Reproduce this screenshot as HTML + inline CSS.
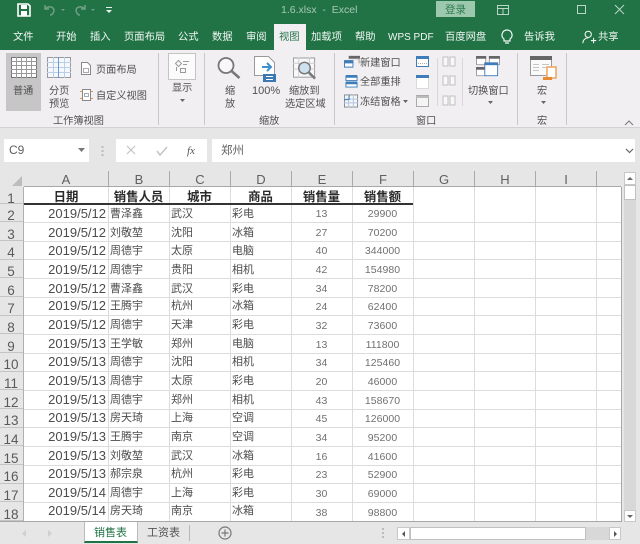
<!DOCTYPE html>
<html><head><meta charset="utf-8"><style>
html,body{margin:0;padding:0}
body{width:640px;height:544px;overflow:hidden;position:relative;background:#e6e6e6;font-family:"Liberation Sans","Noto Sans CJK SC",sans-serif;color:#444}
div,span,svg{position:absolute}
.t{white-space:nowrap;line-height:14px;font-size:10.2px;color:#505050;margin-top:1px}
.tab{top:31px;color:#f2f7f4;font-size:10.3px;line-height:14px;white-space:nowrap}
.sep{width:1px;background:#c9c8c9;top:53px;height:72px}
.ch{top:171px;height:16px;text-align:center;font-size:13px;line-height:17px;color:#606060;border-right:1px solid #aaa;box-sizing:border-box}
.r{left:0;width:601px}
.rh{left:0;width:23px;top:0;bottom:0;background:#e6e6e6;text-align:center;font-size:13.5px;color:#5a5a5a;line-height:23px;border-bottom:1px solid #c4c4c4;box-sizing:border-box;padding-right:1px}
.r b{position:absolute;font-weight:normal;white-space:nowrap;top:2px;line-height:14px}
.r.e b{top:3px}
.r.z b{top:1px}
.d{right:495px;font-size:13px;color:#4c4c4c}
.n1{left:110px;font-size:11px;color:#4c4c4c}
.n2{left:171px;font-size:11px;color:#4c4c4c}
.n3{left:232px;font-size:11px;color:#4c4c4c}
.r b.q,.r.e b.q,.r.z b.q{left:291px;width:61px;text-align:center;font-size:10.5px;color:#707070;top:3px;letter-spacing:.05px}
.r b.m,.r.e b.m,.r.z b.m{left:352px;width:61px;text-align:center;font-size:10.5px;color:#707070;top:3px;letter-spacing:.05px}
.r b.h{font-weight:bold;font-size:12.4px;color:#2a2a2a;text-align:center;top:3px}
.vl{top:187px;height:334px;width:1px;background:#dcdcdc}
.hl{left:24px;width:597px;height:1px;background:#dcdcdc}
</style></head><body>
<div style="left:0;top:0;width:640px;height:50px;background:#217346"></div>
<svg style="left:17px;top:3px" width="14" height="14" viewBox="0 0 14 14"><path d="M1 1h10l2 2v10H1z" fill="none" stroke="#fff" stroke-width="1.600"/><path d="M4 2h6v4H4zM4 8h6v5H4z" fill="#fff"/></svg>
<svg style="left:42px;top:3px" width="70" height="15" viewBox="0 0 70 15"><path d="M3 2v4h4M3 6c3-3 8-3 9 1 0 3-2 5-4 5" fill="none" stroke="#6f9f85" stroke-width="1.500"/><path d="M19 6l2 2 2-2z" fill="#6f9f85"/><path d="M43 2v4h-4M43 6c-3-3-8-3-9 1 0 3 2 5 4 5" fill="none" stroke="#6f9f85" stroke-width="1.500"/><path d="M49 6l2 2 2-2z" fill="#6f9f85"/></svg>
<svg style="left:105px;top:6px" width="8" height="8" viewBox="0 0 8 8"><path d="M1 1h6v1H1zM1 4h6L4 7z" fill="#e8f1ec"/></svg>
<div class="t" style="left:281px;top:2px;font-size:10.500px;color:#a8c8b5">1.6.xlsx&nbsp; -&nbsp; Excel</div>
<div style="left:436px;top:1px;width:39px;height:16px;background:#9cc8ae"></div>
<div class="t" style="left:445px;top:2px;color:#2f7b50;font-size:10.500px">登录</div>
<svg style="left:495px;top:3px" width="135" height="14" viewBox="0 0 135 14"><path d="M2.500 2.500h11v9h-11zM2.500 5.500h11M8 5.500v6" fill="none" stroke="#bcd6c6"/><path d="M82.500 2.500h8v8h-8z" fill="none" stroke="#bcd6c6"/><path d="M120 2l9 9M129 2l-9 9" stroke="#bcd6c6" fill="none"/></svg>

<div class="tab" style="left:13px">文件</div>
<div class="tab" style="left:56px">开始</div>
<div class="tab" style="left:90px">插入</div>
<div class="tab" style="left:124px">页面布局</div>
<div class="tab" style="left:178px">公式</div>
<div class="tab" style="left:212px">数据</div>
<div class="tab" style="left:246px">审阅</div>
<div style="left:274px;top:24px;width:32px;height:26px;background:#f1eff1"></div>
<div class="tab" style="left:279px;color:#217346">视图</div>
<div class="tab" style="left:311px">加载项</div>
<div class="tab" style="left:355px">帮助</div>
<div class="tab" style="left:388px;font-size:10px">WPS PDF</div>
<div class="tab" style="left:445px">百度网盘</div>
<svg style="left:499px;top:28px" width="16" height="17" viewBox="0 0 16 17"><path d="M8 2a5 5 0 0 0-3 9v2h6v-2a5 5 0 0 0-3-9zM6 15h4" fill="none" stroke="#f2f7f4" stroke-width="1.200"/></svg>
<div class="tab" style="left:524px">告诉我</div>
<svg style="left:582px;top:29px" width="16" height="16" viewBox="0 0 18 16"><circle cx="7" cy="5" r="3.500" fill="none" stroke="#f2f7f4" stroke-width="1.200"/><path d="M1 15c0-4 3-6 6-6M10 12h6M13 9v6" fill="none" stroke="#f2f7f4" stroke-width="1.200"/></svg>
<div class="tab" style="left:598px">共享</div>

<div style="left:0;top:50px;width:640px;height:77px;background:#f1eff1"></div>
<div style="left:0;top:127px;width:640px;height:1px;background:#d2d2d2"></div>
<div style="left:6px;top:53px;width:35px;height:58px;background:#c6c6c6"></div>
<svg style="left:11px;top:57px" width="26" height="21" viewBox="0 0 26 21"><rect x=".5" y=".5" width="25" height="20" fill="#fff" stroke="#777"/><path d="M0 4.500h26M0 8.500h26M0 12.500h26M0 16.500h26M5.500 0v21M10.500 0v21M15.500 0v21M20.500 0v21" stroke="#999"/></svg>
<div class="t" style="left:13px;top:84px">普通</div>
<svg style="left:47px;top:57px" width="24" height="21" viewBox="0 0 24 21"><rect x=".5" y=".5" width="23" height="20" fill="#f4f8fd" stroke="#9a9a9a"/><path d="M0 5.500h24M0 10.500h24M0 15.500h24M6.500 0v21M17.500 0v21" stroke="#b9cfe8"/><path d="M11.500 0v21" stroke="#6b9bd0"/></svg>
<div class="t" style="left:49px;top:84px">分页</div>
<div class="t" style="left:49px;top:97px">预览</div>
<svg style="left:81px;top:62px" width="10" height="13" viewBox="0 0 10 13"><path d="M.5.500h6l3 3v9h-9z" fill="#fff" stroke="#888"/><path d="M2.500 6.500h5v4h-5z" fill="none" stroke="#aaa"/></svg>
<div class="t" style="left:96px;top:63px">页面布局</div>
<svg style="left:80px;top:88px" width="13" height="14" viewBox="0 0 13 14"><path d="M2.500 1.500h8v11h-8z" fill="#fff" stroke="#888"/><path d="M0 3.500h2M11 3.500h2M0 10.500h2M11 10.500h2" stroke="#e09a50"/><path d="M4.500 5.500h4v3h-4z" fill="none" stroke="#aaa"/></svg>
<div class="t" style="left:96px;top:89px">自定义视图</div>
<div class="t" style="left:53px;top:114px">工作簿视图</div>
<div class="sep" style="left:158px"></div>

<div style="left:168px;top:53px;width:26px;height:25px;background:#fbfbfb;border:1px solid #c4c4c4"></div>
<svg style="left:174px;top:58px" width="16" height="16" viewBox="0 0 16 16"><path d="M1.500 5.500l3-3 3 3-3 3zM9 3.500h6M9 6.500h4M6.500 10.500h5v4h-5zM2.500 9v4" fill="none" stroke="#999"/></svg>
<div class="t" style="left:172px;top:81px">显示</div>
<svg style="left:180px;top:99px" width="5" height="3"><path d="M0 0h5L2.500 3z" fill="#666"/></svg>
<div class="sep" style="left:204px"></div>

<svg style="left:217px;top:57px" width="24" height="22" viewBox="0 0 24 22"><circle cx="9" cy="8.500" r="7.500" fill="#f8f8f8" stroke="#777" stroke-width="1.800"/><path d="M14.500 14l8 7" stroke="#777" stroke-width="2.500"/></svg>
<div class="t" style="left:225px;top:84px">缩</div>
<div class="t" style="left:225px;top:97px">放</div>
<svg style="left:254px;top:56px" width="22" height="26" viewBox="0 0 22 26"><path d="M.5.500h14l6 6v13H.5z" fill="#fff" stroke="#999"/><path d="M8 11h9M13 7l4 4-4 4" fill="none" stroke="#3f8fce" stroke-width="2"/><rect x="9" y="18" width="13" height="8" fill="#3d78b5"/><path d="M12 20.500h7M12 23.500h7" stroke="#fff"/></svg>
<div class="t" style="left:252px;top:83px;font-size:11px">100%</div>
<svg style="left:293px;top:57px" width="24" height="25" viewBox="0 0 25 25"><rect x=".5" y=".5" width="22" height="20" fill="#f8f8f8" stroke="#999"/><path d="M0 6h23M0 12h23M6 0v21M17 0v21" stroke="#ccc"/><circle cx="12" cy="11" r="6" fill="#cfe0ee" stroke="#777" stroke-width="1.500"/><path d="M16 15l7 7" stroke="#777" stroke-width="2.500"/></svg>
<div class="t" style="left:289px;top:84px">缩放到</div>
<div class="t" style="left:285px;top:97px">选定区域</div>
<div class="t" style="left:259px;top:114px">缩放</div>
<div class="sep" style="left:334px"></div>

<svg style="left:344px;top:55px" width="16" height="13" viewBox="0 0 17 13"><path d="M5 .500h12v3H5z" fill="#666"/><path d="M5 3.500h11v5" fill="none" stroke="#999"/><path d="M0 5h10v3H0z" fill="#3f7cba"/><path d="M.5 8h9v4.500h-9z" fill="#fff" stroke="#3f7cba"/></svg>
<div class="t" style="left:360px;top:56px">新建窗口</div>
<svg style="left:345px;top:75px" width="13" height="13" viewBox="0 0 14 14"><path d="M1 1h12v5H1z" fill="#fff" stroke="#3f7cba"/><path d="M1 8h12v5H1z" fill="#fff" stroke="#3f7cba"/><path d="M1 0h12v3H1zM1 7h12v3H1z" fill="#3f7cba"/></svg>
<div class="t" style="left:360px;top:75px">全部重排</div>
<svg style="left:344px;top:94px" width="14" height="14" viewBox="0 0 15 14"><rect x=".5" y=".5" width="14" height="13" fill="#f4f6fa" stroke="#888"/><path d="M0 5h15M5 0v14M10 0v14M0 9h15" stroke="#aec3dd"/><path d="M0 5.500h6M5.500 0v6" stroke="#3f7cba"/></svg>
<div class="t" style="left:360px;top:95px">冻结窗格</div>
<svg style="left:403px;top:100px" width="5" height="3"><path d="M0 0h5L2.500 3z" fill="#666"/></svg>
<svg style="left:416px;top:56px" width="14" height="54" viewBox="0 0 14 54"><rect x=".5" y=".5" width="12" height="10" fill="#fff" stroke="#3f7cba"/><path d="M0 1h13v2H0z" fill="#3f7cba"/><path d="M2 7.500h9" stroke="#aaa" stroke-dasharray="1 1"/><rect x=".5" y="20.500" width="12" height="12" fill="#fff" stroke="#bbb" stroke-dasharray="1 1"/><path d="M0 19h13v3H0z" fill="#3f7cba"/><rect x=".5" y="39.500" width="12" height="11" fill="#f4f4f4" stroke="#aaa"/><path d="M0 40h13v2H0z" fill="#bbb"/></svg>
<div class="sep" style="left:437px;top:58px;height:48px;background:#d8d8d8"></div>
<svg style="left:442px;top:56px" width="15" height="52" viewBox="0 0 15 52"><path d="M1 1h5v9H1zM8 1h5v9H8zM1 20h5v9H1zM8 20h5v9H8zM1 40h5v9H1zM8 40h5v9H8z" fill="#f8f8f8" stroke="#c0c0c0"/></svg>
<div class="sep" style="left:462px;top:58px;height:48px;background:#d8d8d8"></div>
<svg style="left:476px;top:56px" width="24" height="22" viewBox="0 0 26 24"><path d="M.5.500h10v9H.5zM14.500.500h11v9h-11zM.5 12.500h10v9H.5z" fill="#fff" stroke="#999"/><path d="M0 0h11v3H0zM14 0h12v3H14zM0 12h11v3H0z" fill="#666"/><rect x="9.500" y="7.500" width="14" height="14" fill="#fff" stroke="#3f7cba"/><path d="M9 7h15v3H9z" fill="#3f7cba"/></svg>
<div class="t" style="left:468px;top:84px">切换窗口</div>
<svg style="left:488px;top:101px" width="5" height="3"><path d="M0 0h5L2.500 3z" fill="#666"/></svg>
<div class="t" style="left:416px;top:114px">窗口</div>
<div class="sep" style="left:517px"></div>
<svg style="left:530px;top:56px" width="27" height="25" viewBox="0 0 27 25"><rect x=".5" y=".5" width="21" height="19" fill="#fafafa" stroke="#999"/><path d="M0 0h22v4H0z" fill="#666"/><path d="M3 8.500h6M3 11.500h6M3 14.500h6M12 8.500h7M12 11.500h4" stroke="#c5c5c5"/><path d="M17 11h9v11h-9z" fill="#fff" stroke="#eda45c" stroke-width="1.500"/><path d="M13 21h9v3h-9z" fill="#e88a33"/></svg>
<div class="t" style="left:537px;top:84px">宏</div>
<svg style="left:541px;top:101px" width="5" height="3"><path d="M0 0h5L2.500 3z" fill="#666"/></svg>
<div class="t" style="left:537px;top:114px">宏</div>
<div class="sep" style="left:566px"></div>
<svg style="left:624px;top:120px" width="10" height="6"><path d="M1 5l4-4 4 4" fill="none" stroke="#777"/></svg>

<div style="left:4px;top:139px;width:85px;height:23px;background:#fff"></div>
<div class="t" style="left:9px;top:142px;font-size:12px;color:#606060">C9</div>
<svg style="left:78px;top:148px" width="7" height="4"><path d="M0 0h7L3.500 4z" fill="#777"/></svg>
<div style="left:116px;top:139px;width:91px;height:23px;background:#fff"></div>
<svg style="left:126px;top:145px" width="11" height="11"><path d="M1 1l8 8M9 1l-8 8" stroke="#c4c4c4" stroke-width="1.200"/></svg>
<svg style="left:156px;top:146px" width="12" height="10"><path d="M1 5l3 4 7-8" fill="none" stroke="#c4c4c4" stroke-width="1.500"/></svg>
<div class="t" style="left:187px;top:143px;font-family:'Liberation Serif',serif;font-style:italic;font-size:11px;color:#555">fx</div>
<div style="left:212px;top:139px;width:423px;height:23px;background:#fff"></div>
<div class="t" style="left:221px;top:143px;font-size:11.500px;color:#666">郑州</div>
<svg style="left:625px;top:148px" width="9" height="6"><path d="M1 1l3.500 3.500L8 1" fill="none" stroke="#666" stroke-width="1.200"/></svg>
<svg style="left:101px;top:146px" width="3" height="11"><path d="M.5 0h2v2h-2zM.5 4h2v2h-2zM.5 8h2v2h-2z" fill="#bbb"/></svg>

<div style="left:24px;top:187px;width:597px;height:334px;background:#fff"></div>
<svg style="left:12px;top:176px" width="10" height="10"><path d="M10 0v10H0z" fill="#bdbdbd"/></svg>
<div class="ch" style="left:24px;width:85px">A</div>
<div class="ch" style="left:109px;width:61px">B</div>
<div class="ch" style="left:170px;width:61px">C</div>
<div class="ch" style="left:231px;width:61px">D</div>
<div class="ch" style="left:292px;width:61px">E</div>
<div class="ch" style="left:353px;width:61px">F</div>
<div class="ch" style="left:414px;width:61px">G</div>
<div class="ch" style="left:475px;width:61px">H</div>
<div class="ch" style="left:536px;width:61px">I</div>
<div style="left:24px;top:186px;width:597px;height:1px;background:#a8a8a8"></div>
<div style="left:23px;top:187px;width:1px;height:334px;background:#b0b0b0"></div>
<div class="vl" style="left:108px"></div><div class="vl" style="left:169px"></div><div class="vl" style="left:230px"></div><div class="vl" style="left:291px"></div><div class="vl" style="left:352px"></div><div class="vl" style="left:413px"></div><div class="vl" style="left:474px"></div><div class="vl" style="left:535px"></div><div class="vl" style="left:596px"></div>
<div class="hl" style="top:222px"></div><div class="hl" style="top:241px"></div><div class="hl" style="top:259px"></div><div class="hl" style="top:278px"></div><div class="hl" style="top:297px"></div><div class="hl" style="top:315px"></div><div class="hl" style="top:334px"></div><div class="hl" style="top:353px"></div><div class="hl" style="top:371px"></div><div class="hl" style="top:390px"></div><div class="hl" style="top:409px"></div><div class="hl" style="top:427px"></div><div class="hl" style="top:446px"></div><div class="hl" style="top:465px"></div><div class="hl" style="top:483px"></div><div class="hl" style="top:502px"></div>

<div class="r" style="top:187px;height:17px"><span class="rh">1</span><b class="h" style="left:24px;width:84px">日期</b><b class="h" style="left:108px;width:61px">销售人员</b><b class="h" style="left:169px;width:61px">城市</b><b class="h" style="left:230px;width:61px">商品</b><b class="h" style="left:291px;width:61px">销售量</b><b class="h" style="left:352px;width:61px">销售额</b></div>
<div style="left:24px;top:203px;width:389px;height:1.500px;background:#333"></div>
<div class="r e" style="top:204px;height:18px"><span class="rh">2</span><b class="d">2019/5/12</b><b class="n1">曹泽鑫</b><b class="n2">武汉</b><b class="n3">彩电</b><b class="q">13</b><b class="m">29900</b></div>
<div class="r e" style="top:223px;height:18px"><span class="rh">3</span><b class="d">2019/5/12</b><b class="n1">刘敬堃</b><b class="n2">沈阳</b><b class="n3">冰箱</b><b class="q">27</b><b class="m">70200</b></div>
<div class="r e" style="top:241px;height:19px"><span class="rh">4</span><b class="d">2019/5/12</b><b class="n1">周德宇</b><b class="n2">太原</b><b class="n3">电脑</b><b class="q">40</b><b class="m">344000</b></div>
<div class="r e" style="top:260px;height:18px"><span class="rh">5</span><b class="d">2019/5/12</b><b class="n1">周德宇</b><b class="n2">贵阳</b><b class="n3">相机</b><b class="q">42</b><b class="m">154980</b></div>
<div class="r e" style="top:279px;height:18px"><span class="rh">6</span><b class="d">2019/5/12</b><b class="n1">曹泽鑫</b><b class="n2">武汉</b><b class="n3">彩电</b><b class="q">34</b><b class="m">78200</b></div>
<div class="r" style="top:297px;height:19px"><span class="rh">7</span><b class="d">2019/5/12</b><b class="n1">王腾宇</b><b class="n2">杭州</b><b class="n3">冰箱</b><b class="q">24</b><b class="m">62400</b></div>
<div class="r" style="top:316px;height:18px"><span class="rh">8</span><b class="d">2019/5/12</b><b class="n1">周德宇</b><b class="n2">天津</b><b class="n3">彩电</b><b class="q">32</b><b class="m">73600</b></div>
<div class="r" style="top:335px;height:18px"><span class="rh">9</span><b class="d">2019/5/13</b><b class="n1">王学敏</b><b class="n2">郑州</b><b class="n3">电脑</b><b class="q">13</b><b class="m">111800</b></div>
<div class="r" style="top:353px;height:19px"><span class="rh">10</span><b class="d">2019/5/13</b><b class="n1">周德宇</b><b class="n2">沈阳</b><b class="n3">相机</b><b class="q">34</b><b class="m">125460</b></div>
<div class="r" style="top:372px;height:18px"><span class="rh">11</span><b class="d">2019/5/13</b><b class="n1">周德宇</b><b class="n2">太原</b><b class="n3">彩电</b><b class="q">20</b><b class="m">46000</b></div>
<div class="r" style="top:391px;height:18px"><span class="rh">12</span><b class="d">2019/5/13</b><b class="n1">周德宇</b><b class="n2">郑州</b><b class="n3">相机</b><b class="q">43</b><b class="m">158670</b></div>
<div class="r" style="top:409px;height:19px"><span class="rh">13</span><b class="d">2019/5/13</b><b class="n1">房天琦</b><b class="n2">上海</b><b class="n3">空调</b><b class="q">45</b><b class="m">126000</b></div>
<div class="r" style="top:428px;height:18px"><span class="rh">14</span><b class="d">2019/5/13</b><b class="n1">王腾宇</b><b class="n2">南京</b><b class="n3">空调</b><b class="q">34</b><b class="m">95200</b></div>
<div class="r" style="top:447px;height:18px"><span class="rh">15</span><b class="d">2019/5/13</b><b class="n1">刘敬堃</b><b class="n2">武汉</b><b class="n3">冰箱</b><b class="q">16</b><b class="m">41600</b></div>
<div class="r" style="top:465px;height:19px"><span class="rh">16</span><b class="d">2019/5/13</b><b class="n1">郝宗泉</b><b class="n2">杭州</b><b class="n3">彩电</b><b class="q">23</b><b class="m">52900</b></div>
<div class="r" style="top:484px;height:18px"><span class="rh">17</span><b class="d">2019/5/14</b><b class="n1">周德宇</b><b class="n2">上海</b><b class="n3">彩电</b><b class="q">30</b><b class="m">69000</b></div>
<div class="r z" style="top:503px;height:18px"><span class="rh">18</span><b class="d">2019/5/14</b><b class="n1">房天琦</b><b class="n2">南京</b><b class="n3">冰箱</b><b class="q">38</b><b class="m">98800</b></div>

<div style="left:0;top:521px;width:621px;height:1px;background:#a8a8a8"></div>
<div style="left:621px;top:187px;width:1px;height:335px;background:#a8a8a8"></div>
<div style="left:624px;top:172px;width:12px;height:350px;background:#d8d8d8"></div>
<div style="left:624px;top:172px;width:12px;height:13px;background:#fff;border:1px solid #c8c8c8;box-sizing:border-box"></div>
<svg style="left:627px;top:177px" width="6" height="3"><path d="M0 3h6L3 0z" fill="#666"/></svg>
<div style="left:624px;top:185px;width:12px;height:15px;background:#fff;border:1px solid #c0c0c0;box-sizing:border-box"></div>
<div style="left:624px;top:510px;width:12px;height:12px;background:#fff;border:1px solid #c8c8c8;box-sizing:border-box"></div>
<svg style="left:627px;top:515px" width="6" height="3"><path d="M0 0h6L3 3z" fill="#666"/></svg>

<svg style="left:22px;top:530px" width="30" height="7"><path d="M4 0v7L0 3.500z" fill="#cfcfcf"/><path d="M26 0v7l4-3.500z" fill="#cfcfcf"/></svg>
<div style="left:84px;top:522px;width:54px;height:21px;background:#fff;border-bottom:2px solid #217346;border-left:1px solid #bbb;border-right:1px solid #bbb;box-sizing:border-box"></div>
<div class="t" style="left:94px;top:525px;color:#217346;font-size:11px">销售表</div>
<div class="t" style="left:147px;top:525px;font-size:11px;color:#555">工资表</div>
<div style="left:189px;top:525px;width:1px;height:16px;background:#b8b8b8"></div>
<svg style="left:218px;top:526px" width="14" height="14" viewBox="0 0 14 14"><circle cx="7" cy="7" r="6" fill="none" stroke="#777" stroke-width="1.200"/><path d="M7 3.500v7M3.500 7h7" stroke="#777" stroke-width="1.200"/></svg>
<svg style="left:382px;top:528px" width="3" height="11"><path d="M0 0h2v2H0zM0 4h2v2H0zM0 8h2v2H0z" fill="#bbb"/></svg>
<div style="left:397px;top:527px;width:224px;height:13px;background:#d8d8d8"></div>
<div style="left:397px;top:527px;width:13px;height:13px;background:#fff;border:1px solid #c8c8c8;box-sizing:border-box"></div>
<svg style="left:402px;top:531px" width="3" height="6"><path d="M3 0v6L0 3z" fill="#555"/></svg>
<div style="left:410px;top:527px;width:176px;height:13px;background:#fff;border:1px solid #c0c0c0;box-sizing:border-box"></div>
<div style="left:609px;top:527px;width:12px;height:13px;background:#fff;border:1px solid #c8c8c8;box-sizing:border-box"></div>
<svg style="left:614px;top:531px" width="3" height="6"><path d="M0 0v6l3-3z" fill="#555"/></svg>
</body></html>
